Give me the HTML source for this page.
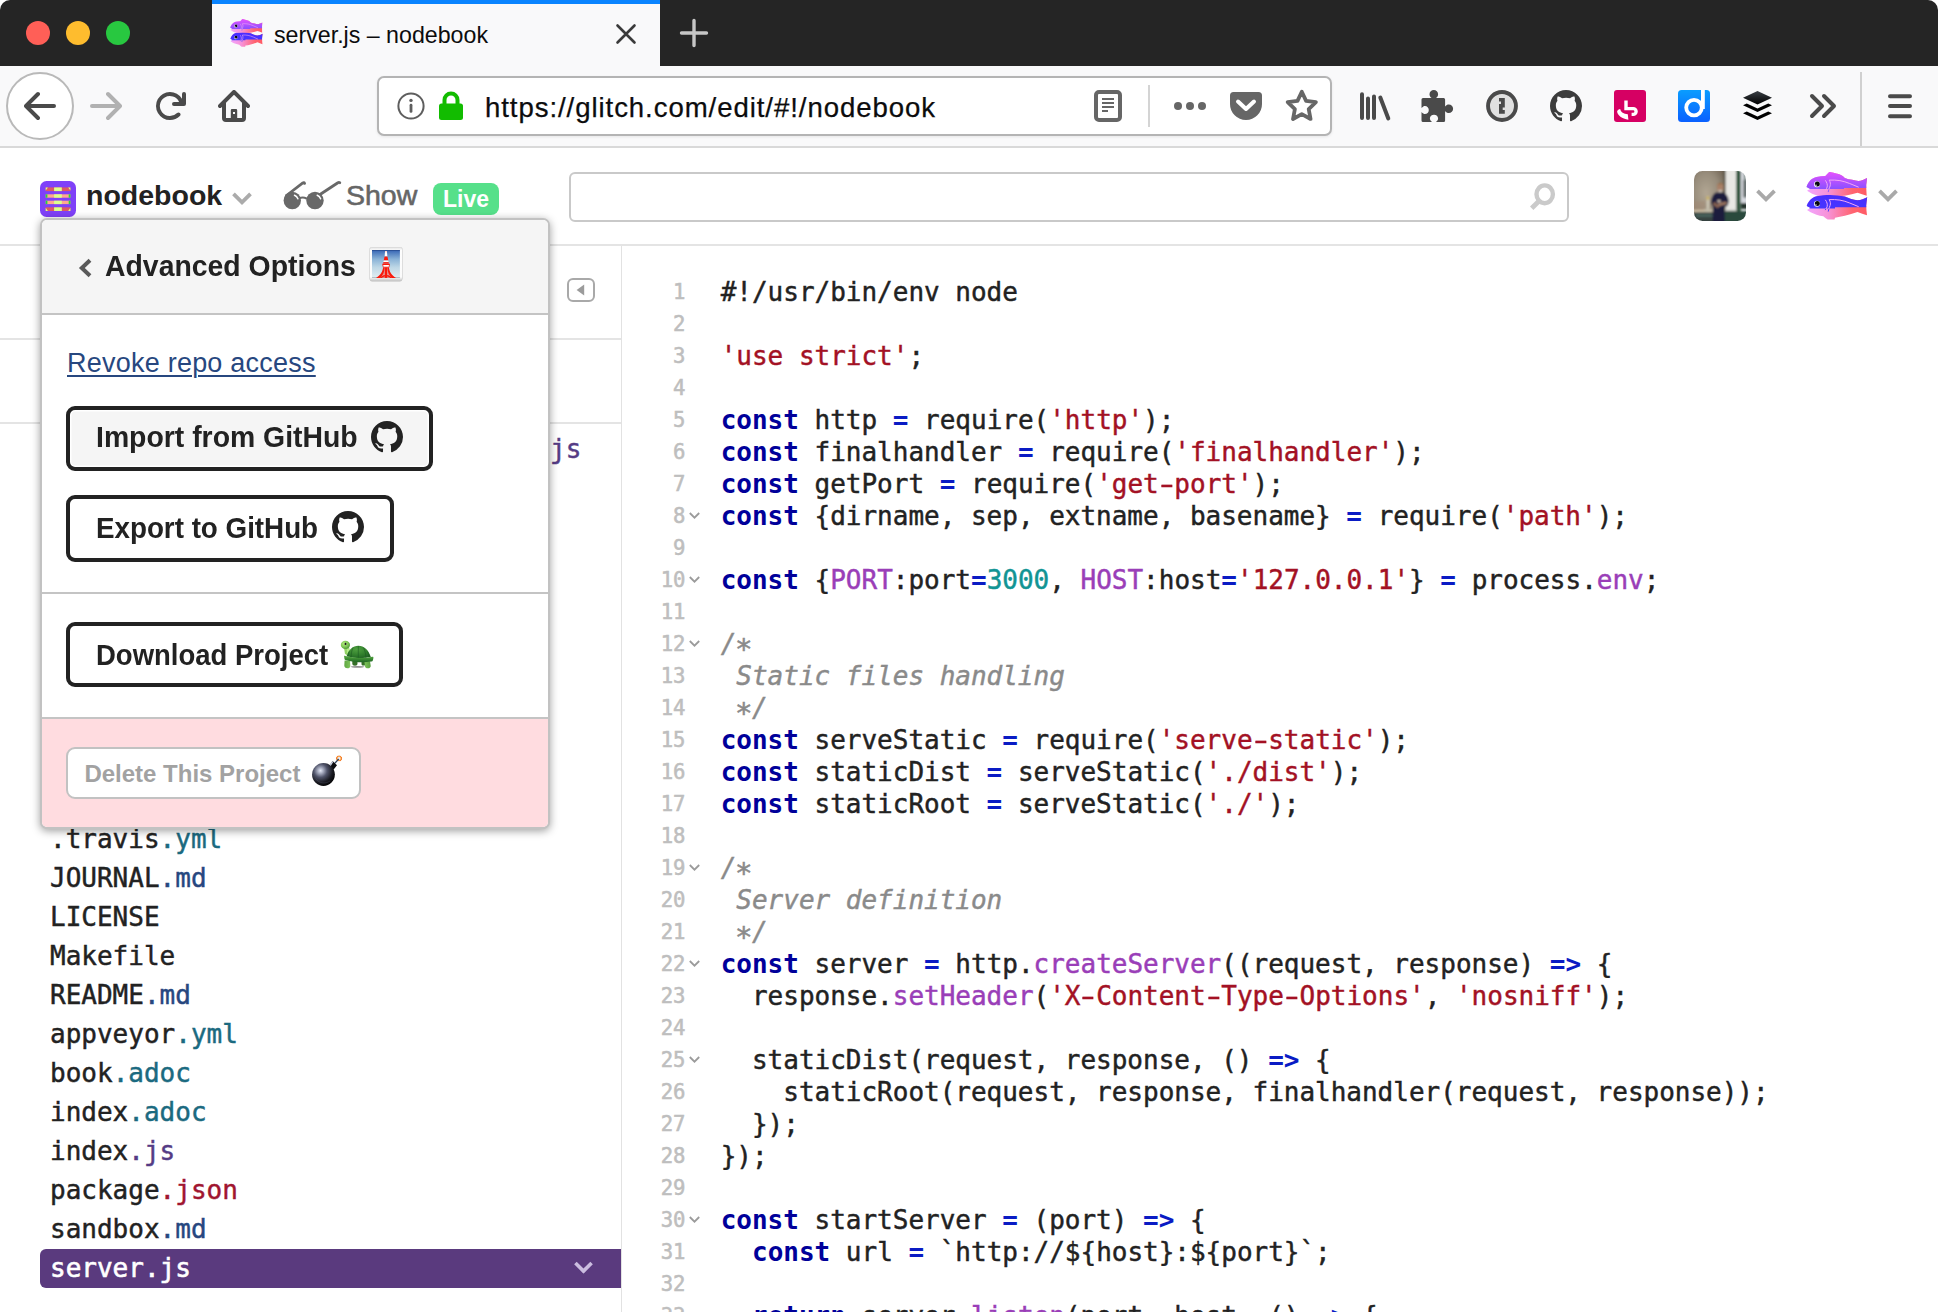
<!DOCTYPE html>
<html lang="en">
<head>
<meta charset="utf-8">
<title>server.js – nodebook</title>
<style>
*{box-sizing:border-box;margin:0;padding:0}
html,body{width:1938px;height:1312px;overflow:hidden;background:#fff}
body{position:relative;font-family:"Liberation Sans",sans-serif;color:#222}
.abs{position:absolute}
/* ---------- browser chrome ---------- */
#titlebar{left:0;top:0;width:1938px;height:66px;background:#252525;border-radius:10px 10px 0 0}
#corner-bg{left:0;top:0;width:1938px;height:20px;background:#fff}
.tl{width:24px;height:24px;border-radius:50%;top:21px}
#tab{left:212px;top:0;width:448px;height:66px;background:#f9f9fa}
#tabline{left:212px;top:0;width:448px;height:4px;background:#0a84ff}
#tabtitle{left:274px;top:20px;font-size:23.2px;color:#0c0c0d;white-space:nowrap;line-height:30px}
#navbar{left:0;top:66px;width:1938px;height:81px;background:#f9f9fa}
#navline{left:0;top:146px;width:1938px;height:2px;background:#d9d9d9}
#backbtn{left:6px;top:72px;width:68px;height:68px;border-radius:50%;border:2px solid #b9b9b9;background:#fff}
#urlbar{left:377px;top:76px;width:955px;height:60px;border:2px solid #b4b4b4;border-radius:7px;background:#fff;box-shadow:0 1px 3px rgba(0,0,0,.08)}
#urltext{left:485px;top:89.500px;-webkit-text-stroke:.25px;font-size:27.6px;letter-spacing:.92px;line-height:36px;color:#0c0c0d;white-space:nowrap}
/* ---------- glitch header ---------- */
#ghead{left:0;top:148px;width:1938px;height:96px;background:#fff}
#gheadline{left:0;top:244px;width:1938px;height:2px;background:#e4e4e4}
#pavatar{left:40px;top:181px;width:36px;height:36px;border-radius:6px;background:#8a46f5;overflow:hidden}
#pname{left:86px;top:175px;font-size:28.5px;font-weight:bold;line-height:40px;color:#222;white-space:nowrap}
#show{left:346px;top:175px;font-size:28.5px;line-height:40px;color:#666;-webkit-text-stroke:.6px #666;white-space:nowrap}
#live{left:433px;top:183px;width:66px;height:32px;border-radius:8px;background:#56e08a;color:#fff;font-weight:bold;font-size:23px;line-height:32px;text-align:center}
#search{left:569px;top:172px;width:1000px;height:50px;border:2px solid #c9c9c9;border-radius:6px;background:#fff}
#uavatar{left:1694px;top:171px;width:52px;height:50px;border-radius:7px;overflow:hidden;background:#6b6a5b}
/* ---------- sidebar ---------- */
#sidebar{left:0;top:246px;width:621px;height:1066px;background:#fff}
#sideline{left:621px;top:246px;width:2px;height:1066px;background:#e2e2e2}
.hline{left:0;width:621px;height:2px;background:#e4e4e4}
.file{left:50px;font-family:"DejaVu Sans Mono","Liberation Mono",monospace;font-size:26px;line-height:39px;white-space:nowrap;color:#222;-webkit-text-stroke:.45px}
.yml{color:#1b6a80}.md{color:#27477f}.adoc{color:#1b6a80}.js{color:#553b85}.json{color:#a01530}
#sel{left:40px;top:1249px;width:581px;height:39px;background:#5a3a7e;border-radius:6px 0 0 6px}
/* ---------- popover ---------- */
#pop{left:40px;top:218px;width:510px;height:611px;background:#fff;border:2px solid #c2c2c2;border-radius:7px;box-shadow:0 2px 9px rgba(0,0,0,.38)}
#pophead{left:42px;top:220px;width:506px;height:93px;background:#f5f5f5;border-radius:5px 5px 0 0}
.popline{left:42px;width:506px;height:2px;background:#c4c4c4}
#popdanger{left:42px;top:719px;width:506px;height:108px;background:#ffdce0;border-radius:0 0 5px 5px}
#poptitle{left:105px;top:245.800px;font-size:29.500px;font-weight:bold;line-height:40px;color:#222;white-space:nowrap;transform-origin:0 50%;transform:scaleX(.9624)}
#revoke{left:67px;top:344px;font-size:27px;letter-spacing:.23px;line-height:38px;color:#27477f;text-decoration:underline;white-space:nowrap;text-underline-offset:3px;text-decoration-thickness:1.500px}
.btn{border:4px solid #222;border-radius:9px;background:#fff}
.btxt{left:95.500px;font-weight:bold;font-size:29.500px;line-height:34px;color:#222;white-space:nowrap;transform-origin:0 50%}
#delbtn{left:66px;top:747px;width:295px;height:52px;border:2px solid #c2c2c2;border-radius:9px;background:#fff}
#deltxt{left:84.400px;top:757.400px;font-weight:bold;font-size:24px;line-height:34px;color:#a2a2a2;white-space:nowrap}
/* ---------- editor ---------- */
#editor{left:622px;top:246px;width:1316px;height:1066px;background:#fff;overflow:hidden}
.ln,.cl{position:absolute;font-family:"DejaVu Sans Mono","Liberation Mono",monospace;white-space:pre;line-height:32px;height:32px}
.ln{left:0;width:63.500px;text-align:right;font-size:20.600px;color:#bebebe;-webkit-text-stroke:.55px #bebebe}
.cl{left:98.700px;font-size:26px;color:#222;-webkit-text-stroke:.45px;letter-spacing:-.012px}
.k{color:#00009a;font-weight:bold;-webkit-text-stroke:0}.o{color:#0a1bc4;font-weight:bold;-webkit-text-stroke:0}.s{color:#a31124}.n{color:#119494}.p{color:#9a3eb8}.c{color:#8a8a8a;font-style:italic}
.h{display:inline-block;transform:scaleX(1.55)}.a{display:inline-block;transform:translateY(4.500px) scale(1.12)}
.fold{position:absolute;left:67px;width:11px;height:7px}
</style>
</head>
<body>
<svg width="0" height="0" style="position:absolute">
<defs>
<linearGradient id="fg1" x1="0" y1="0" x2="0" y2="1"><stop offset="0" stop-color="#e552ff"/><stop offset="1" stop-color="#8a50ff"/></linearGradient>
<linearGradient id="fg2" x1="0" y1="0" x2="1" y2="0"><stop offset="0" stop-color="#f2a6ff"/><stop offset=".35" stop-color="#f792d8"/><stop offset=".75" stop-color="#ff6470"/><stop offset="1" stop-color="#ff5a64"/></linearGradient>
<linearGradient id="fg3" x1="0" y1="0" x2="0" y2="1"><stop offset="0" stop-color="#4a2cff"/><stop offset="1" stop-color="#4536ff"/></linearGradient>
<clipPath id="fc1"><path d="M.5 14.900C1.500 12 2.800 10 4.600 8.100 6.300 6.500 8.300 5.500 10.500 4.900 13.500 4.200 16.500 4 19.300 3.950L23.200.05C24 0 24.500.1 25.100.3 28.500 1 32 1.800 34.900 3 36.500 3.800 37.600 4.800 38.800 5.900 41 6.800 43.500 7.400 46.100 7.850 48.200 8.400 50.300 8.900 52.400 9.100 55.500 8.500 58.500 7.300 61 5.900 60.800 8.500 60.400 11 60.200 13 60.200 16 60.500 20 60.700 23.700 57.500 22.800 54.500 21.700 51.500 20.800 44 23 36 24.300 28 25H14C12.800 24.500 11.600 23.900 10.500 23.200 9 22.800 7.500 22.300 6.100 21.750L1 18.800 4.100 16.900z"/></clipPath>
<clipPath id="fc2"><path d="M.7 33.950C1.500 31.500 2.800 29.500 4.600 27.600 6.300 26 8.300 24.900 10.500 24.200 15 23.300 19.500 23 24.100 23 29 23.100 34 23.600 38.800 24.400 41 25.100 43.100 26 45.100 27.100 47.200 27.700 49.300 28.100 51.500 28.300 55 27.900 58.300 26.700 61.200 25.200 60.800 28 60.400 31 60.200 33.500 60.300 36.800 60.600 40 61 43.200 57.800 42.300 54.600 41.100 51.500 40 47.300 41.500 43 42.700 38.800 43.700 35.500 44.500 32.200 45.100 29 45.700L28.500 47.600H21.700C20 46.700 18.600 45.500 17.300 44.200 15 43.900 12.700 43.400 10.500 42.700 8.500 42 6.500 41.200 4.600 40.300L1 38.100 4.400 36.100z"/></clipPath>
<symbol id="fish" viewBox="0 0 62 49">
<g clip-path="url(#fc1)"><rect x="0" y="0" width="62" height="26" fill="url(#fg2)"/><path d="M0 0h62v15.900H38v1.200H0z" fill="url(#fg1)"/></g>
<path d="M19.300 8.300c1.600 2.200 2.300 4.300 1.900 6.600-.3 1.200-1 2.300-1.700 3.400M23.200 8.100c1.200 2 1.500 3.900.9 5.850-.4 1.300-.9 2.400-1.400 3.400" fill="none" stroke="#f4a8f4" stroke-width="1"/><path d="M23.200 8.100c3.500-.2 7.100 0 10.700.5 3.300.6 6.600 1.600 9.800 2.900 3.100 1.200 6.100 2.400 9 3.700" fill="none" stroke="#f4a8f4" stroke-width="1"/><path d="M22.900 17.300l-.7 2.800" stroke="#8a5cff" stroke-width="1" fill="none"/>
<g clip-path="url(#fc2)"><rect x="0" y="22" width="62" height="27" fill="url(#fg2)"/><path d="M0 22h62v13.200H29v1.200H0z" fill="url(#fg3)"/></g>
<path d="M19.300 27.800c1.600 2.200 2.300 4.300 1.900 6.600-.3 1.200-1 2.300-1.700 3.400M23.200 27.600c1.200 2 1.500 3.900.9 5.850-.4 1.300-.9 2.400-1.400 3.400" fill="none" stroke="#f4a8f4" stroke-width="1"/><path d="M23.200 27.600c3.500-.2 7.100 0 10.700.5 3.300.6 6.600 1.600 9.800 2.900 3.100 1.200 6.100 2.400 9 3.700" fill="none" stroke="#f4a8f4" stroke-width="1"/><path d="M22.900 36.800l-.7 2.800M19.900 36.800l-.6 1.300" stroke="#4a3cff" stroke-width="1" fill="none"/>
<circle cx="11" cy="12.200" r="3" fill="#fff"/><circle cx="11.300" cy="11.900" r="2.500" fill="#08080f"/><circle cx="10" cy="13.300" r=".7" fill="#fff"/>
<circle cx="11" cy="31.750" r="3" fill="#fff"/><circle cx="11.300" cy="31.450" r="2.500" fill="#08080f"/><circle cx="10" cy="32.850" r=".7" fill="#fff"/>
</symbol>
<symbol id="gh" viewBox="0 0 16 16"><path fill-rule="evenodd" d="M8 0C3.580 0 0 3.580 0 8c0 3.540 2.290 6.530 5.470 7.590.4.070.55-.17.550-.38 0-.19-.01-.82-.01-1.490-2.010.37-2.530-.49-2.690-.94-.09-.23-.48-.94-.82-1.130-.28-.15-.68-.52-.01-.53.63-.01 1.080.58 1.230.82.720 1.210 1.870.87 2.330.66.070-.52.280-.87.510-1.070-1.780-.2-3.640-.89-3.640-3.950 0-.87.310-1.590.82-2.150-.08-.2-.36-1.020.08-2.120 0 0 .67-.21 2.200.82.640-.18 1.320-.27 2-.27.680 0 1.360.09 2 .27 1.530-1.040 2.200-.82 2.200-.82.440 1.100.16 1.920.08 2.120.51.560.82 1.270.82 2.150 0 3.070-1.870 3.750-3.650 3.950.29.250.54.730.54 1.480 0 1.070-.01 1.930-.01 2.200 0 .21.150.46.550.38A8.013 8.013 0 0 0 16 8c0-4.420-3.580-8-8-8z"/></symbol>
<symbol id="chev" viewBox="0 0 20 13"><path d="M1.500 1.800L10 10.300l8.500-8.500" fill="none" stroke-width="3.800"/></symbol>
</defs></svg>
<div id="corner-bg" class="abs"></div>
<div id="titlebar" class="abs"></div>
<div class="abs tl" style="left:26px;background:#ff5f57"></div>
<div class="abs tl" style="left:66px;background:#febc2e"></div>
<div class="abs tl" style="left:106px;background:#28c840"></div>
<div id="tab" class="abs"></div>
<div id="tabline" class="abs"></div>
<div id="tabtitle" class="abs">server.js – nodebook</div>
<div id="navbar" class="abs"></div>
<div id="navline" class="abs"></div>
<div id="backbtn" class="abs"></div>
<div id="urlbar" class="abs"></div>
<div id="urltext" class="abs">https://glitch.com/edit/#!/nodebook</div>

<!--CHROMEICONS-->
<!-- tab favicon fish -->
<svg class="abs" style="left:229.500px;top:19.300px" width="33" height="28.500" viewBox="0 0 62 49" preserveAspectRatio="none"><use href="#fish"/></svg>
<!-- tab close -->
<svg class="abs" style="left:615px;top:23px" width="22" height="22" viewBox="0 0 22 22"><path d="M2.5 2.5l17 17M19.5 2.5l-17 17" stroke="#3a3a3a" stroke-width="2.6" stroke-linecap="round" fill="none"/></svg>
<!-- new tab plus -->
<svg class="abs" style="left:679px;top:18px" width="30" height="30" viewBox="0 0 30 30"><path d="M15 2.5v25M2.5 15h25" stroke="#c6c6c6" stroke-width="3.4" stroke-linecap="round" fill="none"/></svg>
<!-- back -->
<svg class="abs" style="left:24px;top:90px" width="32" height="32" viewBox="0 0 16 16"><path fill="#4a4a4a" d="M15 7H3.414l4.293-4.293a1 1 0 0 0-1.414-1.414l-6 6a1 1 0 0 0 0 1.414l6 6a1 1 0 0 0 1.414-1.414L3.414 9H15a1 1 0 0 0 0-2z"/></svg>
<!-- forward -->
<svg class="abs" style="left:90px;top:90px" width="32" height="32" viewBox="0 0 16 16"><path fill="#b1b1b1" transform="translate(16 0) scale(-1 1)" d="M15 7H3.414l4.293-4.293a1 1 0 0 0-1.414-1.414l-6 6a1 1 0 0 0 0 1.414l6 6a1 1 0 0 0 1.414-1.414L3.414 9H15a1 1 0 0 0 0-2z"/></svg>
<!-- reload -->
<svg class="abs" style="left:154px;top:90px" width="32" height="32" viewBox="0 0 16 16"><path fill="#4a4a4a" d="M15 1a1 1 0 0 0-1 1v2.418A6.995 6.995 0 1 0 8 15a6.954 6.954 0 0 0 4.950-2.050 1 1 0 0 0-1.414-1.414A5.019 5.019 0 1 1 12.549 6H10a1 1 0 0 0 0 2h5a1 1 0 0 0 1-1V2a1 1 0 0 0-1-1z"/></svg>
<!-- home -->
<svg class="abs" style="left:218px;top:90px" width="32" height="32" viewBox="0 0 16 16"><path fill="#4a4a4a" d="M15.707 7.293l-7-7a1 1 0 0 0-1.414 0l-7 7a1 1 0 0 0 1.414 1.414L2 8.414V14a2 2 0 0 0 2 2h8a2 2 0 0 0 2-2V8.414l.293.293a1 1 0 0 0 1.414-1.414zM12 14H4V6.414l4-4 4 4z"/><path fill="#4a4a4a" d="M7 9.5h2a.6.6 0 0 1 .6.600V14H6.400v-3.900A.6.6 0 0 1 7 9.500zM7.500 11v1h1v-1z" fill-rule="evenodd"/></svg>
<!-- info -->
<svg class="abs" style="left:396px;top:91px" width="30" height="30" viewBox="0 0 30 30"><circle cx="15" cy="15" r="12.600" fill="none" stroke="#5e5e5e" stroke-width="2"/><circle cx="15" cy="9.400" r="1.700" fill="#5e5e5e"/><rect x="13.600" y="12.800" width="2.800" height="9" rx="1.400" fill="#5e5e5e"/></svg>
<!-- lock -->
<svg class="abs" style="left:438px;top:91px" width="26" height="30" viewBox="0 0 26 30"><path d="M6.500 13V9a6.500 6.500 0 0 1 13 0v4" fill="none" stroke="#12bc00" stroke-width="4"/><rect x="1" y="12.500" width="24" height="16.500" rx="2.500" fill="#12bc00"/></svg>
<!-- reader -->
<svg class="abs" style="left:1094px;top:90px" width="28" height="32" viewBox="0 0 28 32"><rect x="2" y="2" width="24" height="28" rx="3" fill="none" stroke="#666" stroke-width="4"/><path d="M8 9h12M8 13h12M8 17h12M8 21h6" stroke="#666" stroke-width="2" fill="none"/></svg>
<div class="abs" style="left:1148px;top:85px;width:2px;height:42px;background:#d4d4d4"></div>
<!-- dots -->
<svg class="abs" style="left:1172px;top:100px" width="36" height="12" viewBox="0 0 36 12"><circle cx="6" cy="6" r="4" fill="#666"/><circle cx="18" cy="6" r="4" fill="#666"/><circle cx="30" cy="6" r="4" fill="#666"/></svg>
<!-- pocket -->
<svg class="abs" style="left:1230px;top:92px" width="32" height="28" viewBox="0 0 32 28"><path fill="#666" d="M3.500 0h25A3.500 3.500 0 0 1 32 3.500V12a16 16 0 0 1-32 0V3.500A3.500 3.500 0 0 1 3.500 0z"/><path d="M8 9.500l8 7.500 8-7.500" fill="none" stroke="#fff" stroke-width="4" stroke-linecap="round" stroke-linejoin="round"/></svg>
<!-- star -->
<svg class="abs" style="left:1284.200px;top:88px" width="35.600" height="35.600" viewBox="0 0 34 34"><path d="M17 3.600l4.100 8.700 9.400 1.200-6.900 6.600 1.800 9.500L17 25l-8.400 4.600 1.800-9.500-6.900-6.600 9.400-1.200z" fill="none" stroke="#666" stroke-width="3.600" stroke-linejoin="round"/></svg>
<!-- library -->
<svg class="abs" style="left:1358px;top:90px" width="34" height="32" viewBox="0 0 34 32"><path d="M4 4.200v23.800M10 8.400v19.600M16 6.400v21.600M22.300 7.500l8 21" stroke="#4a4a4a" stroke-width="4" stroke-linecap="round" fill="none"/></svg>
<!-- puzzle -->
<svg class="abs" style="left:1421px;top:90px" width="34" height="32" viewBox="0 0 34 32"><path fill="#4a4a4a" d="M2 8h8.600c-1.500-1-2.100-2.300-2.100-3.700C8.500 1.900 10.400 0 12.800 0s4.300 1.900 4.300 4.300c0 1.400-.6 2.700-2.100 3.700h7.600a1.500 1.500 0 0 1 1.500 1.500v7.100c1-1.500 2.300-2.100 3.700-2.100 2.400 0 4.300 1.900 4.300 4.300s-1.900 4.300-4.300 4.300c-1.400 0-2.700-.6-3.700-2.100v9.500a1.500 1.500 0 0 1-1.500 1.500h-7.600c1.500-1.300 2.100-2.400 2.100-3.500 0-2.100-1.700-3.800-4.100-3.800s-4.100 1.700-4.100 3.800c0 1.100.6 2.200 2.100 3.500H2a1.500 1.500 0 0 1-1.500-1.500V22c1.300 1.500 2.400 2.100 3.500 2.100 2.100 0 3.800-1.700 3.800-4.100s-1.700-4.100-3.800-4.100c-1.100 0-2.200.6-3.500 2.100V9.500A1.500 1.500 0 0 1 2 8z"/></svg>
<!-- 1password -->
<svg class="abs" style="left:1486px;top:90px" width="32" height="32" viewBox="0 0 32 32"><circle cx="16" cy="16" r="13.950" fill="#e0e0e0" stroke="#4a4a4a" stroke-width="3.900"/><path fill="#4a4a4a" d="M13 7.900h5.800v9.500h-2.100v2.700h2.100v3.600H13v-9.800h2v-2.300h-2z"/></svg>
<!-- github -->
<svg class="abs" style="left:1550px;top:90px" width="32" height="32" viewBox="0 0 16 16"><path fill="#3c3c3c" fill-rule="evenodd" d="M8 0C3.580 0 0 3.580 0 8c0 3.540 2.290 6.530 5.470 7.590.4.070.55-.17.550-.38 0-.19-.01-.82-.01-1.490-2.010.37-2.530-.49-2.690-.94-.09-.23-.48-.94-.82-1.130-.28-.15-.68-.52-.01-.53.63-.01 1.080.58 1.230.82.720 1.210 1.870.87 2.330.66.070-.52.280-.87.510-1.070-1.780-.2-3.640-.89-3.640-3.950 0-.87.310-1.590.82-2.150-.08-.2-.36-1.020.08-2.120 0 0 .67-.21 2.200.82.640-.18 1.320-.27 2-.27.680 0 1.360.09 2 .27 1.530-1.040 2.200-.82 2.200-.82.440 1.100.16 1.920.08 2.120.51.560.82 1.270.82 2.150 0 3.070-1.870 3.750-3.650 3.950.29.250.54.730.54 1.480 0 1.070-.01 1.930-.01 2.200 0 .21.150.46.550.38A8.013 8.013 0 0 0 16 8c0-4.420-3.580-8-8-8z"/></svg>
<!-- pink ext -->
<svg class="abs" style="left:1614px;top:90px" width="32" height="32" viewBox="0 0 32 32"><rect width="32" height="32" rx="3" fill="#d60063"/><path d="M12 10.600V18.600H19.200A2.900 2.900 0 0 1 19.200 24.400H17.600" fill="none" stroke="#fff" stroke-width="3.400" stroke-linejoin="miter"/><path d="M3.100 21.500C3.500 20 4.800 19.200 6.200 19 6.500 22 10 24 13.800 24.300L14.400 29.700C8 28.500 3.500 25.500 3.100 21.500z" fill="#fff"/></svg>
<!-- blue d -->
<svg class="abs" style="left:1678px;top:90px" width="32" height="32" viewBox="0 0 32 32"><defs><linearGradient id="bd" x1="0" y1="0" x2="0" y2="1"><stop offset="0" stop-color="#0a9dff"/><stop offset="1" stop-color="#0a60ff"/></linearGradient></defs><rect width="32" height="32" rx="3.500" fill="url(#bd)"/><circle cx="16" cy="17.600" r="7.800" fill="none" stroke="#fff" stroke-width="3.800"/><rect x="23" y="0" width="3.800" height="19" fill="#fff"/></svg>
<!-- layers -->
<svg class="abs" style="left:1743px;top:91px" width="29" height="30" viewBox="0 0 29 30"><defs><linearGradient id="ly" x1="0" y1="0" x2="0" y2="1"><stop offset="0" stop-color="#3b4046"/><stop offset="1" stop-color="#000"/></linearGradient></defs><path fill="url(#ly)" d="M14.500 0L29 6.700 14.500 13.400 0 6.700z"/><path fill="#000" d="M0 14.200l3.800-1.800 10.700 5 10.700-5 3.800 1.800-14.500 6.800zM0 22.200l3.800-1.800 10.700 5 10.700-5 3.800 1.800L14.500 29z"/></svg>
<!-- chevrons >> -->
<svg class="abs" style="left:1808px;top:92px" width="30" height="28" viewBox="0 0 30 28"><path d="M4 4l10 10L4 24M16 4l10 10-10 10" fill="none" stroke="#4a4a4a" stroke-width="4" stroke-linecap="round" stroke-linejoin="round"/></svg>
<div class="abs" style="left:1860px;top:72px;width:2px;height:74px;background:#d0d0d0"></div>
<!-- hamburger -->
<svg class="abs" style="left:1886px;top:92px" width="28" height="28" viewBox="0 0 28 28"><path d="M4 4.200h20M4 14.100h20M4 24.200h20" stroke="#4a4a4a" stroke-width="4" stroke-linecap="round" fill="none"/></svg>
<!--/CHROMEICONS-->
<div id="ghead" class="abs"></div>
<div id="gheadline" class="abs"></div>
<div id="pname" class="abs">nodebook</div>
<div id="show" class="abs">Show</div>
<div id="live" class="abs">Live</div>
<div id="search" class="abs"></div>
<!--GICONS-->
<!-- project avatar stripes -->
<svg class="abs" style="left:40px;top:181px" width="36" height="36" viewBox="0 0 36 36"><rect width="36" height="36" rx="6.500" fill="#7f41f8"/>
<g><rect x="5.700" y="6.400" width="24.700" height="3.700" fill="#dc5966"/><rect x="14.100" y="6.400" width="7.700" height="3.700" fill="#dcff8c"/><path d="M5.700 6.400h2.200L5.700 9.600zM30.400 6.400h-2.200l2.200 3.200z" fill="#dcff8c"/>
<rect x="5.700" y="13.300" width="24.700" height="3.400" fill="#ffa98e"/><rect x="14.100" y="13.300" width="7.700" height="3.400" fill="#dcff8c"/><rect x="5.700" y="13.300" width="1.700" height="3.400" fill="#22d83c"/><rect x="28.700" y="13.300" width="1.700" height="3.400" fill="#22d83c"/>
<rect x="5.700" y="19.700" width="24.700" height="3.400" fill="#ffa98e"/><rect x="14.100" y="19.700" width="7.700" height="3.400" fill="#dcff8c"/><rect x="5.700" y="19.700" width="1.700" height="3.400" fill="#22d83c"/><rect x="28.700" y="19.700" width="1.700" height="3.400" fill="#22d83c"/>
<rect x="5.700" y="26.300" width="24.700" height="3.700" fill="#dc5966"/><rect x="14.100" y="26.300" width="7.700" height="3.700" fill="#dcff8c"/><path d="M5.700 30h2.200L5.700 26.800zM30.400 30h-2.200l2.200-3.200z" fill="#dcff8c"/></g></svg>
<svg class="abs" style="left:232px;top:192px" width="20" height="13"><use href="#chev" stroke="#ababab"/></svg>
<!-- glasses -->
<svg class="abs" style="left:282px;top:180px" width="60" height="30" viewBox="0 0 60 30"><g fill="none" stroke="#686868" stroke-linecap="round"><path d="M4.500 15.500L20.800 2.900c.8-.5 1.500-.3 1.800.5" stroke-width="2.800"/><path d="M36.500 15.500L55.500 3c.9-.6 1.700-.7 2.300-.3" stroke-width="2.800"/><path d="M17 18.500c2.500-1.200 5-1.200 7.500 0" stroke-width="2"/></g><circle cx="10.300" cy="20.500" r="8.700" fill="#686868"/><circle cx="33" cy="20.500" r="8.700" fill="#686868"/><path d="M12.500 15.300c1.600.6 2.800 1.800 3.400 3.400M35.200 15.300c1.600.6 2.800 1.800 3.400 3.400" stroke="#fff" stroke-width="1.500" fill="none" stroke-linecap="round"/></svg>
<!-- search magnifier -->
<svg class="abs" style="left:1527px;top:179px" width="32" height="34" viewBox="0 0 32 34"><ellipse cx="17.700" cy="15.300" rx="8.200" ry="8.900" fill="none" stroke="#cacaca" stroke-width="4.400"/><path d="M12.300 21.700L4.700 29.300" stroke="#cacaca" stroke-width="4.800"/></svg>
<!-- user avatar -->
<svg class="abs" style="left:1694px;top:171px" width="52" height="50" viewBox="0 0 52 50"><defs><clipPath id="uac"><rect width="52" height="50" rx="8.500"/></clipPath><filter id="ubl" x="-10%" y="-10%" width="120%" height="120%"><feGaussianBlur stdDeviation="0.9"/></filter>
<radialGradient id="uwall" cx=".42" cy=".45" r=".75"><stop offset="0" stop-color="#b2a794"/><stop offset=".5" stop-color="#968b7a"/><stop offset="1" stop-color="#594c3d"/></radialGradient></defs>
<g clip-path="url(#uac)"><g filter="url(#ubl)"><rect x="-3" y="-3" width="36" height="56" fill="url(#uwall)"/><rect x="-3" y="30" width="14" height="12" fill="#a48a74" opacity=".5"/>
<rect x="31" y="-3" width="12" height="43" fill="#e9e8e4"/><rect x="29.800" y="-3" width="1.700" height="44" fill="#4a4538"/><rect x="42.300" y="-3" width="4.500" height="56" fill="#2a5038"/><rect x="46.800" y="-3" width="8" height="40" fill="#d6d8de"/><rect x="49" y="9" width="5" height="17" fill="#8e8a92"/><rect x="47" y="32" width="7" height="6" fill="#26352e"/><rect x="50.300" y="-3" width="1.500" height="30" fill="#3c5a4c"/>
<rect x="31.500" y="38.500" width="11" height="1.600" fill="#c9ccc8"/><rect x="31" y="40" width="23" height="13" fill="#2c4a3c"/>
<rect x="-3" y="38.800" width="22" height="2.600" fill="#cdbfa6"/><rect x="-3" y="41.300" width="34" height="12" fill="#36433f"/><rect x="2" y="43" width="18" height="3" fill="#46605a"/>
<rect x="12.800" y="25" width="2.200" height="16" fill="#d2ccba"/><rect x="10" y="38" width="8" height="2" fill="#bdb7a4"/><rect x="12.300" y="25.500" width="3" height="3" fill="#c8b060"/>
<path d="M18.500 53V44l.5-8-2-3.500c0-5 1.500-9 5-11h7.500c3.500 1.500 5 5 5.300 9l-1.300 4.500-3 .5.500 17.500z" fill="#1c1f3e"/>
<path d="M18.300 33l5 4 2.500-1.500-5-4.500z" fill="#8a6450"/><path d="M24 32l8.500-1.300.7 2.300-8.700 2.200z" fill="#a07860"/><ellipse cx="25" cy="30.200" rx="1.800" ry="1.100" fill="#d8c8b8"/>
<ellipse cx="26.200" cy="16.200" rx="3.300" ry="4.200" fill="#a88068"/><path d="M22.700 15.500c0-4.500 7-5 7.300-.3-.3-1.300-1-2-1.600-2.200-1.500.4-3.300.5-4.600.3-.6.500-1 1.300-1.100 2.200z" fill="#94683c"/><path d="M24.500 18.800c1.200.6 2.600.6 3.700-.1-.2 1.700-.9 2.600-1.900 2.600s-1.600-.9-1.800-2.500z" fill="#d6cec6"/></g></g></svg>
<svg class="abs" style="left:1756px;top:189px" width="20" height="13"><use href="#chev" stroke="#a9a9a9"/></svg>
<svg class="abs" style="left:1806px;top:172px" width="62" height="49" viewBox="0 0 62 49"><use href="#fish"/></svg>
<svg class="abs" style="left:1878px;top:189px" width="20" height="13"><use href="#chev" stroke="#a9a9a9"/></svg>
<!--/GICONS-->

<div id="sidebar" class="abs"></div>
<div id="sideline" class="abs"></div>
<div class="abs hline" style="top:338px"></div>
<div class="abs hline" style="top:422px"></div>
<div class="abs" style="left:567px;top:278px;width:28px;height:24px;border:2px solid #a9a9a9;border-radius:6px;background:#fff"></div>
<svg class="abs" style="left:576px;top:284px" width="9" height="12" viewBox="0 0 9 12"><path d="M8.200.4v11.200L.6 6z" fill="#9b9b9b"/></svg>
<div class="abs file" style="left:550px;top:430px"><span class="js">js</span></div>
<!--FILES-->
<div class="abs file" style="top:820px">.travis<span class="yml">.yml</span></div>
<div class="abs file" style="top:859px">JOURNAL<span class="md">.md</span></div>
<div class="abs file" style="top:898px">LICENSE</div>
<div class="abs file" style="top:937px">Makefile</div>
<div class="abs file" style="top:976px">README<span class="md">.md</span></div>
<div class="abs file" style="top:1015px">appveyor<span class="yml">.yml</span></div>
<div class="abs file" style="top:1054px">book<span class="adoc">.adoc</span></div>
<div class="abs file" style="top:1093px">index<span class="adoc">.adoc</span></div>
<div class="abs file" style="top:1132px">index<span class="js">.js</span></div>
<div class="abs file" style="top:1171px">package<span class="json">.json</span></div>
<div class="abs file" style="top:1210px">sandbox<span class="md">.md</span></div>
<div id="sel" class="abs"></div>
<div class="abs file" style="top:1249px;color:#fff;-webkit-text-stroke:.6px #fff">server.js</div>
<svg class="abs" style="left:574px;top:1261px" width="19" height="13" viewBox="0 0 20 13"><use href="#chev" stroke="#cbbde0"/></svg>
<!--/FILES-->

<div id="editor" class="abs">
<!--CODE-->
<div class="ln" style="top:30px">1</div>
<div class="cl" style="top:30px">#!/usr/bin/env node</div>
<div class="ln" style="top:62px">2</div>
<div class="ln" style="top:94px">3</div>
<div class="cl" style="top:94px"><span class="s">'use strict'</span>;</div>
<div class="ln" style="top:126px">4</div>
<div class="ln" style="top:158px">5</div>
<div class="cl" style="top:158px"><span class="k">const</span> http <span class="o">=</span> require(<span class="s">'http'</span>);</div>
<div class="ln" style="top:190px">6</div>
<div class="cl" style="top:190px"><span class="k">const</span> finalhandler <span class="o">=</span> require(<span class="s">'finalhandler'</span>);</div>
<div class="ln" style="top:222px">7</div>
<div class="cl" style="top:222px"><span class="k">const</span> getPort <span class="o">=</span> require(<span class="s">'get<span class="h">-</span>port'</span>);</div>
<div class="ln" style="top:254px">8</div>
<svg class="fold" style="top:266px" viewBox="0 0 11 7"><path d="M.8 1l4.700 4.700L10.200 1" fill="none" stroke="#9b9b9b" stroke-width="1.800"/></svg>
<div class="cl" style="top:254px"><span class="k">const</span> {dirname, sep, extname, basename} <span class="o">=</span> require(<span class="s">'path'</span>);</div>
<div class="ln" style="top:286px">9</div>
<div class="ln" style="top:318px">10</div>
<svg class="fold" style="top:330px" viewBox="0 0 11 7"><path d="M.8 1l4.700 4.700L10.200 1" fill="none" stroke="#9b9b9b" stroke-width="1.800"/></svg>
<div class="cl" style="top:318px"><span class="k">const</span> {<span class="p">PORT</span>:port<span class="o">=</span><span class="n">3000</span>, <span class="p">HOST</span>:host<span class="o">=</span><span class="s">'127.0.0.1'</span>} <span class="o">=</span> process.<span class="p">env</span>;</div>
<div class="ln" style="top:350px">11</div>
<div class="ln" style="top:382px">12</div>
<svg class="fold" style="top:394px" viewBox="0 0 11 7"><path d="M.8 1l4.700 4.700L10.200 1" fill="none" stroke="#9b9b9b" stroke-width="1.800"/></svg>
<div class="cl" style="top:382px"><span class="c">/<span class="a">*</span></span></div>
<div class="ln" style="top:414px">13</div>
<div class="cl" style="top:414px"><span class="c"> Static files handling</span></div>
<div class="ln" style="top:446px">14</div>
<div class="cl" style="top:446px"><span class="c"> <span class="a">*</span>/</span></div>
<div class="ln" style="top:478px">15</div>
<div class="cl" style="top:478px"><span class="k">const</span> serveStatic <span class="o">=</span> require(<span class="s">'serve<span class="h">-</span>static'</span>);</div>
<div class="ln" style="top:510px">16</div>
<div class="cl" style="top:510px"><span class="k">const</span> staticDist <span class="o">=</span> serveStatic(<span class="s">'./dist'</span>);</div>
<div class="ln" style="top:542px">17</div>
<div class="cl" style="top:542px"><span class="k">const</span> staticRoot <span class="o">=</span> serveStatic(<span class="s">'./'</span>);</div>
<div class="ln" style="top:574px">18</div>
<div class="ln" style="top:606px">19</div>
<svg class="fold" style="top:618px" viewBox="0 0 11 7"><path d="M.8 1l4.700 4.700L10.200 1" fill="none" stroke="#9b9b9b" stroke-width="1.800"/></svg>
<div class="cl" style="top:606px"><span class="c">/<span class="a">*</span></span></div>
<div class="ln" style="top:638px">20</div>
<div class="cl" style="top:638px"><span class="c"> Server definition</span></div>
<div class="ln" style="top:670px">21</div>
<div class="cl" style="top:670px"><span class="c"> <span class="a">*</span>/</span></div>
<div class="ln" style="top:702px">22</div>
<svg class="fold" style="top:714px" viewBox="0 0 11 7"><path d="M.8 1l4.700 4.700L10.200 1" fill="none" stroke="#9b9b9b" stroke-width="1.800"/></svg>
<div class="cl" style="top:702px"><span class="k">const</span> server <span class="o">=</span> http.<span class="p">createServer</span>((request, response) <span class="o">=&gt;</span> {</div>
<div class="ln" style="top:734px">23</div>
<div class="cl" style="top:734px">  response.<span class="p">setHeader</span>(<span class="s">'X<span class="h">-</span>Content<span class="h">-</span>Type<span class="h">-</span>Options'</span>, <span class="s">'nosniff'</span>);</div>
<div class="ln" style="top:766px">24</div>
<div class="ln" style="top:798px">25</div>
<svg class="fold" style="top:810px" viewBox="0 0 11 7"><path d="M.8 1l4.700 4.700L10.200 1" fill="none" stroke="#9b9b9b" stroke-width="1.800"/></svg>
<div class="cl" style="top:798px">  staticDist(request, response, () <span class="o">=&gt;</span> {</div>
<div class="ln" style="top:830px">26</div>
<div class="cl" style="top:830px">    staticRoot(request, response, finalhandler(request, response));</div>
<div class="ln" style="top:862px">27</div>
<div class="cl" style="top:862px">  });</div>
<div class="ln" style="top:894px">28</div>
<div class="cl" style="top:894px">});</div>
<div class="ln" style="top:926px">29</div>
<div class="ln" style="top:958px">30</div>
<svg class="fold" style="top:970px" viewBox="0 0 11 7"><path d="M.8 1l4.700 4.700L10.200 1" fill="none" stroke="#9b9b9b" stroke-width="1.800"/></svg>
<div class="cl" style="top:958px"><span class="k">const</span> startServer <span class="o">=</span> (port) <span class="o">=&gt;</span> {</div>
<div class="ln" style="top:990px">31</div>
<div class="cl" style="top:990px">  <span class="k">const</span> url <span class="o">=</span> `http://${host}:${port}`;</div>
<div class="ln" style="top:1022px">32</div>
<div class="ln" style="top:1054px">33</div>
<svg class="fold" style="top:1066px" viewBox="0 0 11 7"><path d="M.8 1l4.700 4.700L10.200 1" fill="none" stroke="#9b9b9b" stroke-width="1.800"/></svg>
<div class="cl" style="top:1054px">  <span class="k">return</span> server.<span class="p">listen</span>(port, host, () <span class="o">=&gt;</span> {</div>
<!--/CODE-->
</div>

<div id="pop" class="abs"></div>
<div id="pophead" class="abs"></div>
<div id="popline1" class="abs popline" style="top:313px"></div>
<div id="popline2" class="abs popline" style="top:592px"></div>
<div id="popdanger" class="abs"></div>
<div id="popline3" class="abs popline" style="top:717px"></div>
<svg class="abs" style="left:77px;top:257px" width="16" height="22" viewBox="0 0 16 22"><path d="M13 3.200L4.800 11l8.200 7.800" fill="none" stroke="#5a5a5a" stroke-width="4"/></svg>
<div id="poptitle" class="abs">Advanced Options</div>
<!--TOWER-->
<svg class="abs" style="left:369px;top:247px" width="34" height="35" viewBox="0 0 34 35"><defs><linearGradient id="tw" x1="0" y1="0" x2="0" y2="1"><stop offset="0" stop-color="#3461b0"/><stop offset=".08" stop-color="#4a78bd"/><stop offset=".33" stop-color="#8ab3d7"/><stop offset=".62" stop-color="#bdd7e6"/><stop offset="1" stop-color="#e2edf1"/></linearGradient><linearGradient id="twf" x1="0" y1="0" x2="0" y2="1"><stop offset="0" stop-color="#e4e4e4"/><stop offset=".1" stop-color="#fdfdfd"/><stop offset=".9" stop-color="#fbfbfb"/><stop offset="1" stop-color="#cfcfcf"/></linearGradient></defs>
<rect x=".9" y="1.600" width="32.200" height="32.800" rx="2.200" fill="#8a8a8a" opacity=".55"/><rect x=".5" y=".3" width="33" height="33" rx="2.200" fill="url(#twf)" stroke="#d2d2d2" stroke-width=".7"/><rect x="3" y="3" width="27.900" height="27.900" fill="url(#tw)"/><path d="M3 3h27.900v1H3z" fill="#1f3f80" opacity=".55"/><path d="M3 30.200h27.900v.7H3z" fill="#6a7f88" opacity=".6"/>
<path d="M14.100 20.400C13.600 24.500 12.200 27.600 7.100 30.900h19.800C21.800 27.600 20.400 24.500 19.900 20.400z" fill="#f24a3c" opacity=".5"/>
<path d="M14.100 20.400C13.600 24.500 12.200 27.600 7.100 30.900h3.800C14 28.600 15.200 25.500 15.700 20.400zM19.900 20.400C20.400 24.500 21.800 27.600 26.900 30.900h-3.800C20 28.600 18.800 25.500 18.300 20.400z" fill="#fa1a0c"/>
<path d="M15.900 20.400h2.200v10.500h-2.200z" fill="#fa1a0c"/><path d="M10.900 30.900C12.300 29.300 14 28.400 15.900 28.100v1.400C14.500 29.700 13.500 30.200 12.600 30.900zM23.100 30.900C21.700 29.300 20 28.400 18.100 28.100v1.400C19.500 29.700 20.500 30.200 21.400 30.900z" fill="#fa1a0c"/>
<path d="M16.050 4.100h1.900l.4 5.300h-2.700z" fill="#fff"/><path d="M16.200 4.100h1.600l.1 1.200h-1.800z" fill="#f9c9c4"/>
<path d="M15.600 9.400h2.800l.9 4.200h-4.600z" fill="#fa1a0c"/><path d="M14.700 13.600h4.600l.3 1.500h-5.200z" fill="#fff"/><path d="M14.400 15.100h5.200l.3 1.700h-5.800z" fill="#f4342a"/>
<path d="M13.200 16.800h7.800l-.7 3.600h-6.400z" fill="#fa1a0c"/><path d="M14.200 18h5.800l-.3 1.700h-5.200z" fill="#fff"/></svg>
<!--/TOWER-->
<div id="revoke" class="abs">Revoke repo access</div>
<div class="abs btn" style="left:66px;top:406px;width:367px;height:65px;background:#f5f5f5;box-shadow:inset 0 0 0 1.500px #fff"></div>
<div id="bt1" class="abs btxt" style="top:420px;transform:scaleX(.962)">Import from GitHub</div>
<svg class="abs" style="left:371px;top:421px" width="32" height="32"><use href="#gh" fill="#222"/></svg>
<div class="abs btn" style="left:66px;top:495px;width:328px;height:67px"></div>
<div id="bt2" class="abs btxt" style="top:510.500px;transform:scaleX(.941)">Export to GitHub</div>
<svg class="abs" style="left:332px;top:511px" width="32" height="32"><use href="#gh" fill="#222"/></svg>
<div class="abs btn" style="left:66px;top:622px;width:337px;height:65px"></div>
<div id="bt3" class="abs btxt" style="top:637.500px;transform:scaleX(.9316)">Download Project</div>
<!--TURTLE-->
<svg class="abs" style="left:340px;top:640px" width="34" height="29" viewBox="0 0 34 29"><defs>
<radialGradient id="tsh" cx=".42" cy=".3" r=".8"><stop offset="0" stop-color="#4fa040"/><stop offset=".6" stop-color="#2f7d2b"/><stop offset="1" stop-color="#1f5f22"/></radialGradient>
<radialGradient id="thd" cx=".38" cy=".35" r=".7"><stop offset="0" stop-color="#b4ec80"/><stop offset=".6" stop-color="#7cc454"/><stop offset="1" stop-color="#4c9438"/></radialGradient>
<linearGradient id="tlg" x1="0" y1="0" x2="1" y2="0"><stop offset="0" stop-color="#5ea642"/><stop offset=".5" stop-color="#a6e878"/><stop offset="1" stop-color="#58a03e"/></linearGradient>
<linearGradient id="trm" x1="0" y1="0" x2="0" y2="1"><stop offset="0" stop-color="#62b04c"/><stop offset=".45" stop-color="#3c8c32"/><stop offset="1" stop-color="#1f6424"/></linearGradient></defs>
<ellipse cx="17.500" cy="26.800" rx="7" ry=".9" fill="#000" opacity=".45"/>
<path d="M12.300 20.500h5l.2 3.300c0 1.200-1 1.900-2.500 1.900s-2.700-.8-2.700-2zM21.500 21h4v3c0 1-.8 1.600-2 1.600s-2-.7-2-1.700z" fill="#356f28"/>
<path d="M4.600 20.500h5.400l.3 5.200c.1 1.600-1.200 2.600-2.900 2.600-1.900 0-3.200-1.100-3.100-2.700zM24.400 21.300h5.600l.7 4.400c.2 1.500-1 2.600-2.800 2.600-1.700 0-2.900-1-3-2.400z" fill="url(#tlg)"/>
<path d="M3.800 7.700l5.200-1 .9 4.200-3 4.400-2-1.600c-.2-2.200-.5-4.200-1.100-6z" fill="#94d466"/><path d="M6.800 8.500l2 0 .8 2.300-2.400 3.300z" fill="#bdf294" opacity=".8"/>
<ellipse cx="5.400" cy="4.900" rx="4.600" ry="4.100" fill="url(#thd)"/><ellipse cx="5.500" cy="3.900" rx=".95" ry="1.100" fill="#1c1024"/>
<path d="M6.600 16.300C8.600 9.500 13 5.700 18.300 5.700c5.800 0 10.300 4.100 12.500 11.400-8 1.700-16.200 1.400-24.200-.8z" fill="url(#tsh)"/>
<path d="M18.300 6v12M13 7.600c-1.300 2.800-1.900 6.200-1.800 10M23.500 7.600c1.500 2.800 2.300 6.400 2.400 10.300M9.300 11.500c-.8 1.800-1.200 3.600-1.300 5.400M27.600 11.600c.9 1.900 1.400 3.800 1.500 5.600" stroke="#1d5a22" stroke-width=".8" fill="none" opacity=".75"/>
<path d="M4.100 16.600c-.3-.5.100-1 .7-.8 9 2.500 18.500 2.700 27.600.9.800-.1 1.200.5 1 1.200l-.5 2.300c-.2.800-.7 1.200-1.500 1.300-8.800 1.400-17.800.8-26-1.600-.7-.2-1-.7-1-1.400z" fill="url(#trm)"/></svg>
<!--/TURTLE-->
<div id="delbtn" class="abs"></div>
<div id="deltxt" class="abs">Delete This Project</div>
<!--BOMB-->
<svg class="abs" style="left:311px;top:754px" width="33" height="33" viewBox="0 0 33 33"><defs><radialGradient id="bmb" cx=".37" cy=".33" r=".7"><stop offset="0" stop-color="#e6eaf6"/><stop offset=".14" stop-color="#b4b9cc"/><stop offset=".42" stop-color="#50546a"/><stop offset=".75" stop-color="#1a1b22"/><stop offset="1" stop-color="#040405"/></radialGradient><radialGradient id="spk" cx=".5" cy=".5" r=".5"><stop offset="0" stop-color="#fff"/><stop offset=".3" stop-color="#dfeaff"/><stop offset=".55" stop-color="#ffb060"/><stop offset=".85" stop-color="#f07a28"/><stop offset="1" stop-color="#f07a28" stop-opacity=".2"/></radialGradient></defs>
<circle cx="28.050" cy="4.400" r="3.100" fill="url(#spk)"/>
<path d="M23.200 9.900L27.700 5" stroke="#2f4058" stroke-width="1.300"/>
<path d="M18.300 11.700l3.300-4.700 4.400 4.300-3.600 4.400z" fill="#0c0c10"/><path d="M18.900 12.200l2.800-4.600" stroke="#cfd6e8" stroke-width="1.300"/>
<circle cx="12.450" cy="20.500" r="11.400" fill="url(#bmb)"/><path d="M4.500 24.500c3 4.500 9.500 6 14.500 2.500" stroke="#5a5e72" stroke-width=".7" fill="none" opacity=".45"/></svg>
<!--/BOMB-->
</body>
</html>
